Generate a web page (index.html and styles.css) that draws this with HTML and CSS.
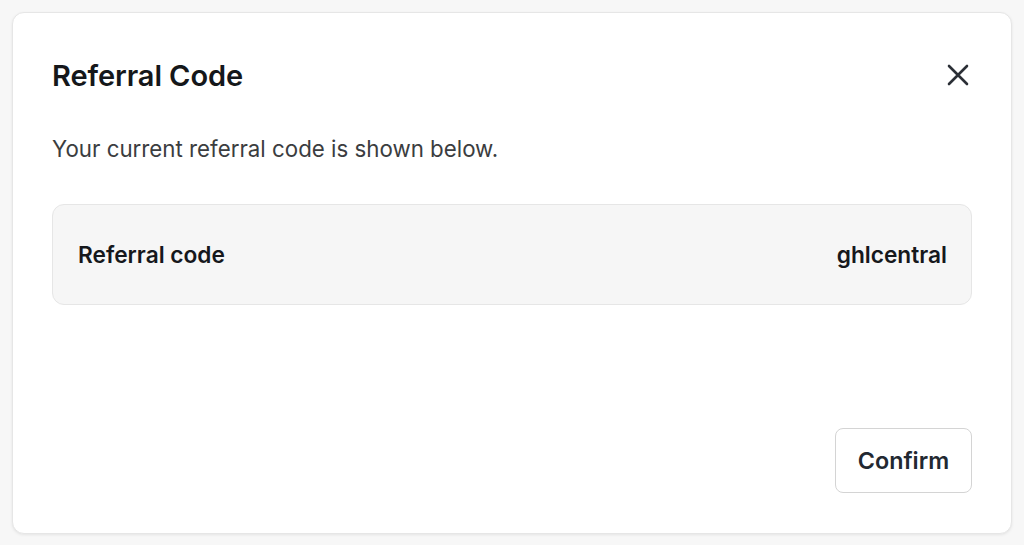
FILE: index.html
```html
<!DOCTYPE html>
<html lang="en">
<head>
<meta charset="utf-8">
<title>Referral Code</title>
<link rel="stylesheet" href="styles.css">
</head>
<body>
<div class="page">
  <div class="modal">
    <div class="modal-head">
      <h1 class="title">Referral Code</h1>
      <button class="close" aria-label="Close">
        <svg width="22" height="22" viewBox="0 0 22 22" fill="none" stroke="#2b2f36" stroke-width="2.6" stroke-linecap="round"><path d="M2 2L20 20M20 2L2 20"/></svg>
      </button>
    </div>
    <p class="desc">Your current referral code is shown below.</p>
    <div class="code-box">
      <span class="code-label">Referral code</span>
      <span class="code-value">ghlcentral</span>
    </div>
    <div class="modal-foot">
      <button class="confirm">Confirm</button>
    </div>
  </div>
</div>
</body>
</html>
```
FILE: styles.css
```css
* { box-sizing: border-box; }
html, body { margin: 0; padding: 0; }
body {
  background: #f7f7f7;
  font-family: Inter, "Noto Sans", sans-serif;
  width: 1024px;
  height: 545px;
  overflow: hidden;
}
.page {
  padding: 12px 12px 11px 12px;
  height: 545px;
}
.modal {
  background: #ffffff;
  border: 1px solid #e6e6e6;
  border-radius: 12px;
  box-shadow: 0 1px 3px rgba(0,0,0,0.08);
  height: 522px;
  padding: 39px 39px 40px 39px;
  display: flex;
  flex-direction: column;
}
.modal-head {
  display: flex;
  justify-content: space-between;
  align-items: center;
  height: 46px;
}
.title {
  margin: 0;
  font-size: 29px;
  font-weight: 600;
  color: #15171a;
  letter-spacing: -0.1px;
}
.close {
  border: 0;
  background: none;
  padding: 0;
  margin-right: 3px;
  width: 22px;
  height: 22px;
  display: flex;
  cursor: pointer;
}
.desc {
  margin: 36px 0 0 0;
  font-size: 22.3px;
  line-height: 30px;
  color: #3b3d40;
  font-weight: 400;
}
.code-box {
  margin-top: 40px;
  height: 101px;
  background: #f6f6f6;
  border: 1px solid #e6e6e6;
  border-radius: 12px;
  display: flex;
  justify-content: space-between;
  align-items: center;
  padding: 0 24px 0 25px;
}
.code-label, .code-value {
  font-size: 22.7px;
  font-weight: 600;
  color: #16181c;
}
.modal-foot {
  margin-top: auto;
  display: flex;
  justify-content: flex-end;
}
.confirm {
  width: 137px;
  height: 65px;
  background: #ffffff;
  border: 1px solid #d4d4d4;
  border-radius: 8px;
  font-family: Inter, "Noto Sans", sans-serif;
  font-size: 23.3px;
  font-weight: 600;
  color: #222831;
  cursor: pointer;
}
```
